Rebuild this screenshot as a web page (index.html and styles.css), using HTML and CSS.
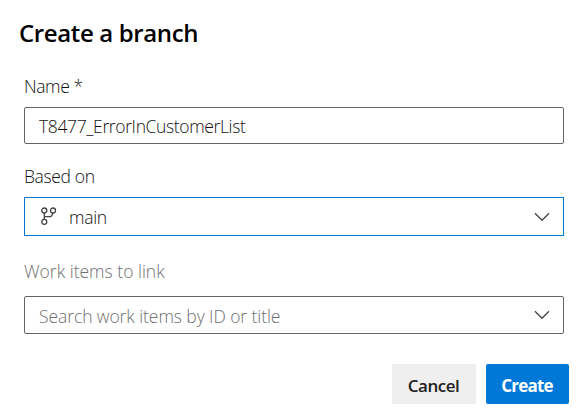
FILE: index.html
```html
<!DOCTYPE html>
<html lang="en">
<head>
<meta charset="utf-8">
<title>Create a branch</title>
<link rel="stylesheet" href="styles.css">
</head>
<body>
<main class="dialog">
  <h1 class="title"><span>Create a branch</span></h1>
  <div class="label label-name"><span>Name *</span></div>
  <div class="field field-name"><span class="value-name">T8477_ErrorInCustomerList</span></div>
  <div class="label label-base"><span>Based on</span></div>
  <div class="field field-base">
    <svg class="branch" width="18" height="20" viewBox="0 0 18 20"><g fill="none" stroke="#444" stroke-width="1.3"><circle cx="5.3" cy="3.500" r="2.5"/><circle cx="14" cy="3.500" r="2.5"/><circle cx="5.3" cy="14.800" r="2.5"/><path d="M5.3 6v6.3M5.3 9.700H11.500q1.700-.4 2.200-3.700"/></g></svg>
    <span class="value-base">main</span>
    <svg class="chevron" width="16" height="10" viewBox="0 0 16 10"><path d="M1 1.3 8 8.3l7-7" fill="none" stroke="#444" stroke-width="1.3"/></svg>
  </div>
  <div class="label label-work"><span>Work items to link</span></div>
  <div class="field field-work"><span class="value-work">Search work items by ID or title</span>
    <svg class="chevron" width="16" height="10" viewBox="0 0 16 10"><path d="M1 1.3 8 8.3l7-7" fill="none" stroke="#444" stroke-width="1.3"/></svg>
  </div>
  <div class="actions">
    <button class="button cancel">Cancel</button>
    <button class="button create">Create</button>
  </div>
</main>
</body>
</html>
```
FILE: styles.css
```css
* { box-sizing: border-box; }
body { margin: 0; background: #fff; font-family: "Open Sans", "Noto Sans", sans-serif; font-size: 17.5px; color: #111; }
.dialog { width: 588px; height: 418px; padding: 18px 19px 0 24px; }
.title { margin: 0 0 0 -5px; height: 30px; font-size: 24px; line-height: 30px; font-weight: 600; color: #000; letter-spacing: -0.37px; }
.label { height: 24px; line-height: 22px; font-weight: 340; white-space: nowrap; }
.label-name { margin-top: 27px; letter-spacing: -0.4px; }
.label-base { margin-top: 21px; letter-spacing: -0.35px; }
.label-work { margin-top: 24px; color: #707070; }
.field { display: flex; align-items: center; width: 540px; padding: 0 13px 0 14px; border: 1px solid #666; border-radius: 2px; font-weight: 340; white-space: nowrap; }
.field-name { height: 37px; margin-top: 8px; letter-spacing: -0.37px; }
.field-base { height: 39px; margin-top: 8px; border-color: #0078d4; border-radius: 0; letter-spacing: -0.3px; }
.field-work { height: 38px; margin-top: 12px; color: #707070; letter-spacing: -0.08px; }
.value-base { margin-left: 12px; }
.value-work { padding-top: 2px; }
.branch { display: block; }
.chevron { display: block; margin-left: auto; }
.actions { display: flex; justify-content: flex-end; gap: 10px; margin-top: 30px; }
.button { width: 84px; height: 40px; padding: 3px 1px 0 0; border: 0; border-radius: 2px; font: 600 17px/37px "Open Sans", "Noto Sans", sans-serif; letter-spacing: -0.5px; }
.cancel { background: #efefef; color: #222; }
.create { width: 83px; background: #0078d7; color: #fff; font-weight: 700; letter-spacing: -0.8px; }
```
